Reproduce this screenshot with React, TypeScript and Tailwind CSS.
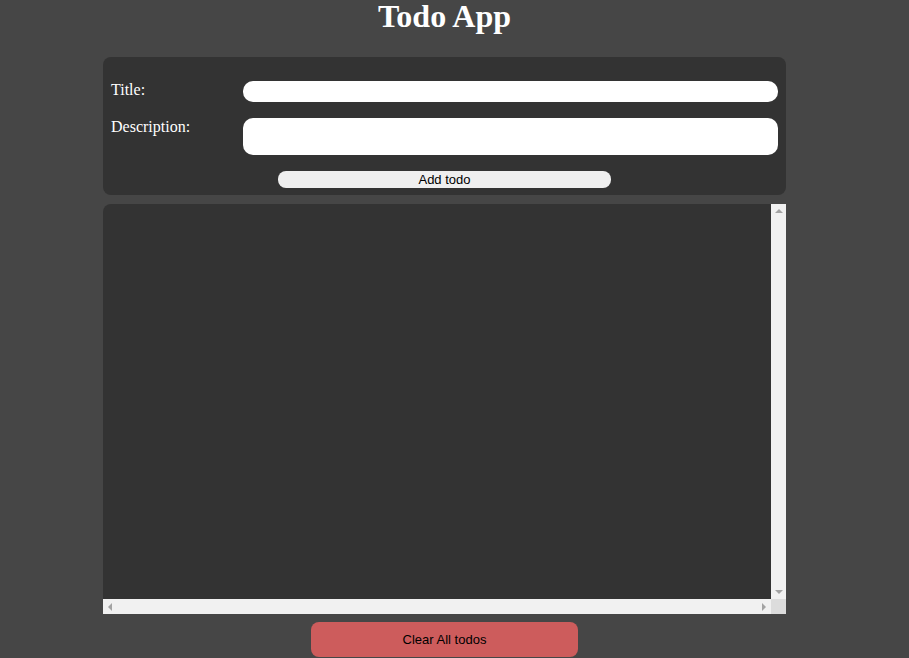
export default function App() {
  return (
    <div className="min-h-screen bg-[#464646] pb-1 font-['Liberation_Serif',serif] text-white">
      <h1 className="ml-[103px] w-[683px] text-center text-[32px] font-bold leading-[32px]">Todo App</h1>

      <form
        className="ml-[103px] mt-[25px] w-[683px] rounded-lg bg-[#333333] px-2 pb-[7px] pt-[24px]"
        onSubmit={(e) => e.preventDefault()}
      >
        <div className="grid grid-cols-[132px_1fr] gap-y-4">
          <label className="text-base leading-[18px]">Title:</label>
          <input type="text" className="h-[21px] rounded-[10px] bg-white px-2 text-black outline-none" />
          <label className="text-base leading-[18px]">Description:</label>
          <textarea className="h-[37px] resize-none rounded-[10px] bg-white px-2 text-black outline-none" />
        </div>
        <div className="mt-4 flex justify-center">
          <button
            type="submit"
            className="h-[17px] w-[333px] rounded-lg bg-[#efefef] font-['Liberation_Sans',Arial,sans-serif] text-[13px] leading-[17px] text-black"
          >
            Add todo
          </button>
        </div>
      </form>

      {/* todo list, with classic scrollbars drawn in */}
      <div className="ml-[103px] mt-[9px] flex h-[410px] w-[683px] flex-col overflow-hidden rounded-tl-lg bg-[#333333]">
        <div className="flex flex-1">
          <div className="flex-1"></div>
          <div className="flex w-[15px] flex-col items-center justify-between bg-[#f1f1f1] py-[5px]">
            <span className="h-0 w-0 border-x-[4px] border-b-[4px] border-x-transparent border-b-[#a3a3a3]"></span>
            <span className="h-0 w-0 border-x-[4px] border-t-[4px] border-x-transparent border-t-[#a3a3a3]"></span>
          </div>
        </div>
        <div className="flex h-[15px]">
          <div className="flex flex-1 items-center justify-between bg-[#f1f1f1] px-[5px]">
            <span className="h-0 w-0 border-y-[4px] border-r-[4px] border-y-transparent border-r-[#a3a3a3]"></span>
            <span className="h-0 w-0 border-y-[4px] border-l-[4px] border-y-transparent border-l-[#a3a3a3]"></span>
          </div>
          <div className="w-[15px] bg-[#dcdcdc]"></div>
        </div>
      </div>

      <div className="ml-[103px] mt-2 flex w-[683px] justify-center">
        <button className="h-[35px] w-[267px] rounded-lg bg-[#cd5c5c] font-['Liberation_Sans',Arial,sans-serif] text-[13px] text-black">
          Clear All todos
        </button>
      </div>
    </div>
  );
}
